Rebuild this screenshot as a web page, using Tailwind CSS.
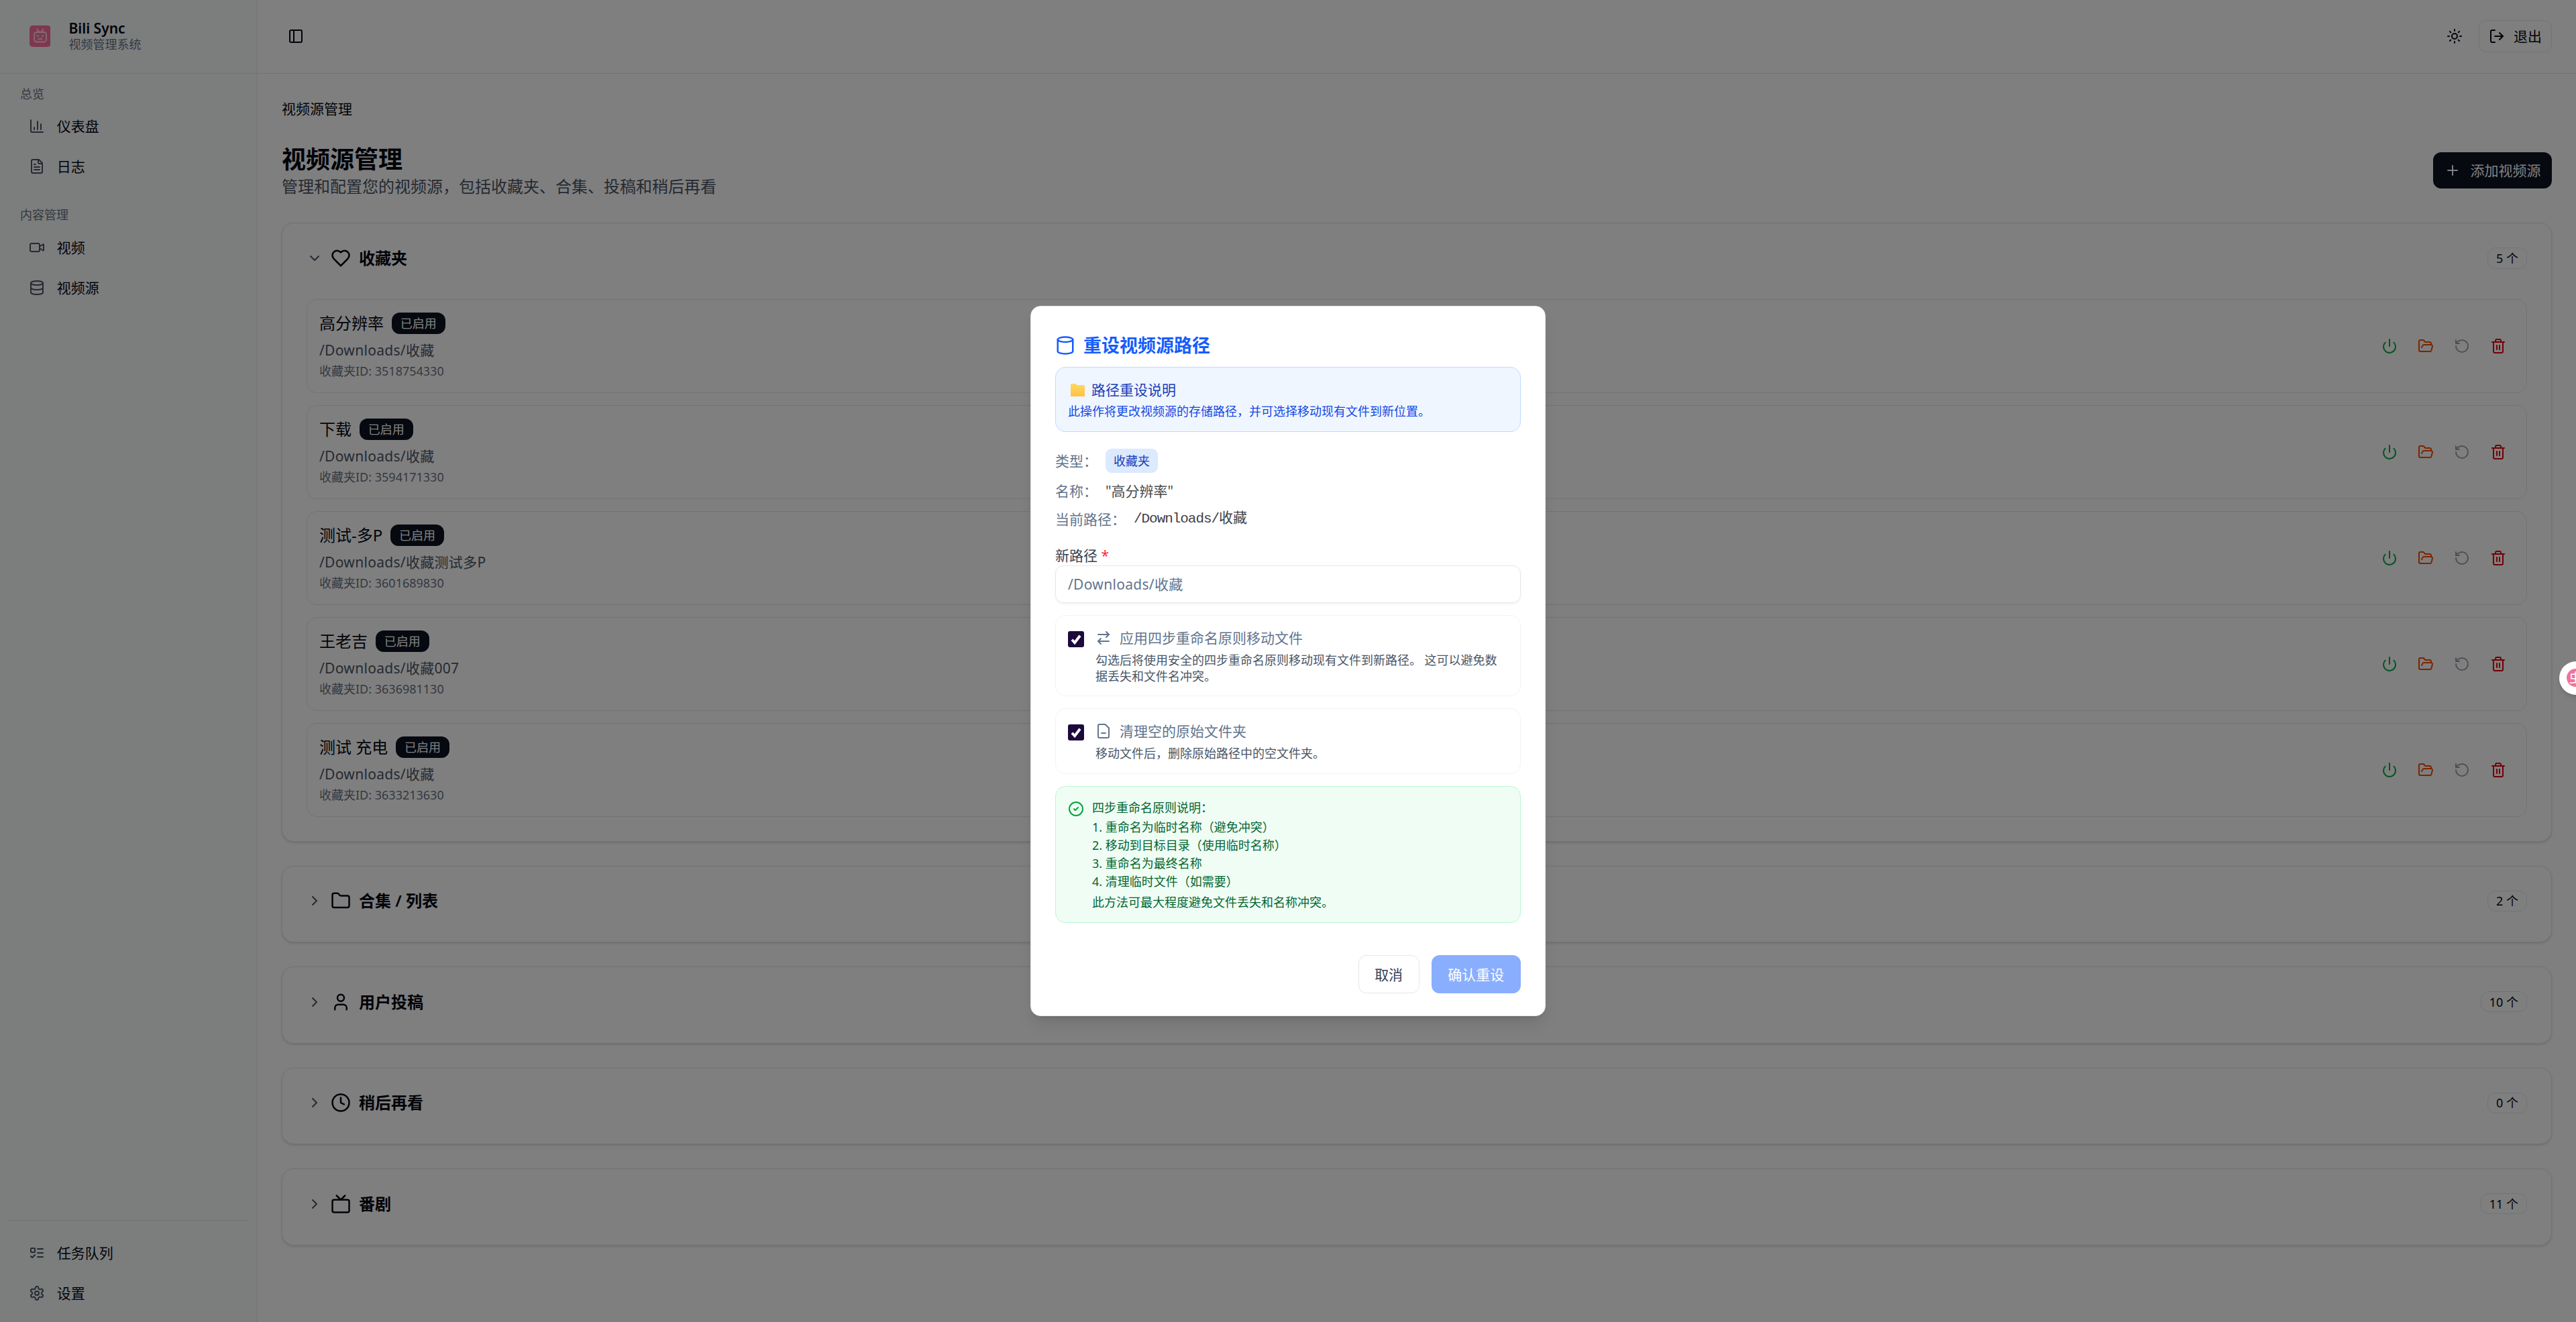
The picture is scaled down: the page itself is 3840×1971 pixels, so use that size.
<!DOCTYPE html>
<html lang="zh-CN">
<head>
    <meta charset="UTF-8">
    <title>Bili Sync</title>
    <script src="https://cdn.jsdelivr.net/npm/@tailwindcss/browser@4"></script>
</head>
<body class="overflow-hidden bg-white">
    <!-- icon sprites -->
    <svg class="hidden">
        <symbol id="i-panel" viewBox="0 0 24 24"><rect x="3" y="3" width="18" height="18" rx="2"/><path d="M9 3v18"/></symbol>
        <symbol id="i-chart" viewBox="0 0 24 24"><path d="M3 3v16a2 2 0 0 0 2 2h16"/><path d="M18 17V9"/><path d="M13 17V5"/><path d="M8 17v-3"/></symbol>
        <symbol id="i-file" viewBox="0 0 24 24"><path d="M15 2H6a2 2 0 0 0-2 2v16a2 2 0 0 0 2 2h12a2 2 0 0 0 2-2V7Z"/><path d="M14 2v4a2 2 0 0 0 2 2h4"/><path d="M10 9H8"/><path d="M16 13H8"/><path d="M16 17H8"/></symbol>
        <symbol id="i-video" viewBox="0 0 24 24"><path d="m16 13 5.223 3.482a.5.5 0 0 0 .777-.416V7.870a.5.5 0 0 0-.752-.432L16 10.500"/><rect x="2" y="6" width="14" height="12" rx="2"/></symbol>
        <symbol id="i-db" viewBox="0 0 24 24"><ellipse cx="12" cy="5" rx="9" ry="3"/><path d="M3 5V19A9 3 0 0 0 21 19V5"/><path d="M3 12A9 3 0 0 0 21 12"/></symbol>
        <symbol id="i-cyl" viewBox="0 0 24 24"><ellipse cx="12" cy="5" rx="9" ry="3"/><path d="M3 5V19A9 3 0 0 0 21 19V5"/></symbol>
        <symbol id="i-todo" viewBox="0 0 24 24"><rect x="3" y="5" width="6" height="6" rx="1"/><path d="m3 17 2 2 4-4"/><path d="M13 6h8"/><path d="M13 12h8"/><path d="M13 18h8"/></symbol>
        <symbol id="i-gear" viewBox="0 0 24 24"><path d="M12.22 2h-.44a2 2 0 0 0-2 2v.18a2 2 0 0 1-1 1.73l-.43.25a2 2 0 0 1-2 0l-.15-.08a2 2 0 0 0-2.73.73l-.22.38a2 2 0 0 0 .73 2.73l.15.1a2 2 0 0 1 1 1.72v.51a2 2 0 0 1-1 1.74l-.15.09a2 2 0 0 0-.73 2.73l.22.38a2 2 0 0 0 2.73.73l.15-.08a2 2 0 0 1 2 0l.43.25a2 2 0 0 1 1 1.73V20a2 2 0 0 0 2 2h.44a2 2 0 0 0 2-2v-.18a2 2 0 0 1 1-1.73l.43-.25a2 2 0 0 1 2 0l.15.08a2 2 0 0 0 2.73-.73l.22-.39a2 2 0 0 0-.73-2.73l-.15-.08a2 2 0 0 1-1-1.74v-.5a2 2 0 0 1 1-1.74l.15-.09a2 2 0 0 0 .73-2.73l-.22-.38a2 2 0 0 0-2.73-.73l-.15.08a2 2 0 0 1-2 0l-.43-.25a2 2 0 0 1-1-1.73V4a2 2 0 0 0-2-2z"/><circle cx="12" cy="12" r="3"/></symbol>
        <symbol id="i-sun" viewBox="0 0 24 24"><circle cx="12" cy="12" r="4"/><path d="M12 2v2"/><path d="M12 20v2"/><path d="m4.930 4.930 1.410 1.410"/><path d="m17.660 17.660 1.410 1.410"/><path d="M2 12h2"/><path d="M20 12h2"/><path d="m6.340 17.660-1.410 1.410"/><path d="m19.070 4.930-1.410 1.410"/></symbol>
        <symbol id="i-logout" viewBox="0 0 24 24"><path d="M9 21H5a2 2 0 0 1-2-2V5a2 2 0 0 1 2-2h4"/><path d="m16 17 5-5-5-5"/><path d="M21 12H9"/></symbol>
        <symbol id="i-plus" viewBox="0 0 24 24"><path d="M5 12h14"/><path d="M12 5v14"/></symbol>
        <symbol id="i-down" viewBox="0 0 24 24"><path d="m6 9 6 6 6-6"/></symbol>
        <symbol id="i-right" viewBox="0 0 24 24"><path d="m9 18 6-6-6-6"/></symbol>
        <symbol id="i-heart" viewBox="0 0 24 24"><path d="M19 14c1.490-1.460 3-3.210 3-5.500A5.500 5.500 0 0 0 16.500 3c-1.760 0-3 .5-4.500 2-1.500-1.500-2.740-2-4.500-2A5.500 5.500 0 0 0 2 8.500c0 2.300 1.500 4.050 3 5.500l7 7Z"/></symbol>
        <symbol id="i-folder" viewBox="0 0 24 24"><path d="M20 20a2 2 0 0 0 2-2V8a2 2 0 0 0-2-2h-7.900a2 2 0 0 1-1.690-.9L9.600 3.900A2 2 0 0 0 7.930 3H4a2 2 0 0 0-2 2v13a2 2 0 0 0 2 2Z"/></symbol>
        <symbol id="i-user" viewBox="0 0 24 24"><path d="M19 21v-2a4 4 0 0 0-4-4H9a4 4 0 0 0-4 4v2"/><circle cx="12" cy="7" r="4"/></symbol>
        <symbol id="i-clock" viewBox="0 0 24 24"><circle cx="12" cy="12" r="10"/><path d="M12 6v6l4 2"/></symbol>
        <symbol id="i-tv" viewBox="0 0 24 24"><rect x="2" y="7" width="20" height="15" rx="2"/><path d="m17 2-5 5-5-5"/></symbol>
        <symbol id="i-power" viewBox="0 0 24 24"><path d="M12 2v10"/><path d="M18.400 6.600a9 9 0 1 1-12.770.04"/></symbol>
        <symbol id="i-open" viewBox="0 0 24 24"><path d="m6 14 1.500-2.900A2 2 0 0 1 9.240 10H20a2 2 0 0 1 1.940 2.500l-1.540 6a2 2 0 0 1-1.950 1.500H4a2 2 0 0 1-2-2V5a2 2 0 0 1 2-2h3.900a2 2 0 0 1 1.690.9l.81 1.200a2 2 0 0 0 1.670.9H18a2 2 0 0 1 2 2v2"/></symbol>
        <symbol id="i-undo" viewBox="0 0 24 24"><path d="M3 12a9 9 0 1 0 9-9 9.750 9.750 0 0 0-6.740 2.740L3 8"/><path d="M3 3v5h5"/></symbol>
        <symbol id="i-trash" viewBox="0 0 24 24"><path d="M3 6h18"/><path d="M19 6v14c0 1-1 2-2 2H7c-1 0-2-1-2-2V6"/><path d="M8 6V4c0-1 1-2 2-2h4c1 0 2 1 2 2v2"/><path d="M10 11v6"/><path d="M14 11v6"/></symbol>
        <symbol id="i-swap" viewBox="0 0 24 24"><path d="m16 3 4 4-4 4"/><path d="M20 7H4"/><path d="m8 21-4-4 4-4"/><path d="M4 17h16"/></symbol>
        <symbol id="i-fileminus" viewBox="0 0 24 24"><path d="M14.500 2H6a2 2 0 0 0-2 2v16a2 2 0 0 0 2 2h12a2 2 0 0 0 2-2V7.500L14.500 2z"/><path d="M9 15h6"/></symbol>
        <symbol id="i-check" viewBox="0 0 24 24"><circle cx="12" cy="12" r="10"/><path d="m9 12 2 2 4-4"/></symbol>
    </svg>

    <div class="relative flex w-[2560px] h-[1314px] overflow-hidden [zoom:1.5] text-[#030712] font-['Noto_Sans','Noto_Sans_CJK_SC',sans-serif]">
        <!-- sidebar -->
        <aside class="flex flex-col w-[256px] shrink-0 bg-[#f9fafb] border-r border-[#e5e7eb]">
            <div class="flex items-center h-[73px] shrink-0 pl-[29px] gap-[18px] border-b border-[#e5e7eb]">
                <svg viewBox="0 0 32 32" class="w-[21.33px] h-[21.33px]">
                    <rect width="32" height="32" rx="5" fill="#ff6f9f"/>
                    <g fill="none" stroke="#fff" stroke-opacity=".75" stroke-width="1.8" stroke-linecap="round">
                        <rect x="7" y="10" width="18" height="14.5" rx="3.5"/>
                        <path d="M11.500 5.500 14 9.500M20.500 5.500 18 9.500M11 15l2.500 1M21 15l-2.500 1M13 19.500c1 1.200 2 1.200 3 0 1 1.200 2 1.200 3 0"/>
                    </g>
                </svg>
                <div>
                    <div class="text-sm leading-4 font-semibold">Bili Sync</div>
                    <div class="text-xs leading-4 text-[#6a7282]">视频管理系统</div>
                </div>
            </div>
            <nav class="flex-1 pt-2 text-sm">
                <div class="h-6 pl-5 flex items-center text-xs text-[#6a7282]">总览</div>
                <a class="flex items-center h-10 pl-[28.5px] gap-3"><svg class="size-4 fill-none stroke-[#4a5565] stroke-2 [stroke-linecap:round] [stroke-linejoin:round]"><use href="#i-chart"/></svg>仪表盘</a>
                <a class="flex items-center h-10 pl-[28.5px] gap-3"><svg class="size-4 fill-none stroke-[#4a5565] stroke-2 [stroke-linecap:round] [stroke-linejoin:round]"><use href="#i-file"/></svg>日志</a>
                <div class="h-6 mt-4 pl-5 flex items-center text-xs text-[#6a7282]">内容管理</div>
                <a class="flex items-center h-10 mt-px pl-[28.5px] gap-3"><svg class="size-4 fill-none stroke-[#4a5565] stroke-2 [stroke-linecap:round] [stroke-linejoin:round]"><use href="#i-video"/></svg>视频</a>
                <a class="flex items-center h-10 pl-[28.5px] gap-3"><svg class="size-4 fill-none stroke-[#4a5565] stroke-2 [stroke-linecap:round] [stroke-linejoin:round]"><use href="#i-db"/></svg>视频源</a>
            </nav>
            <div class="mx-2 pt-3 pb-[8.5px] border-t border-[#e5e7eb] text-sm">
                <a class="flex items-center h-10 pl-[20.5px] gap-3"><svg class="size-4 fill-none stroke-[#4a5565] stroke-2 [stroke-linecap:round] [stroke-linejoin:round]"><use href="#i-todo"/></svg>任务队列</a>
                <a class="flex items-center h-10 pl-[20.5px] gap-3"><svg class="size-4 fill-none stroke-[#4a5565] stroke-2 [stroke-linecap:round] [stroke-linejoin:round]"><use href="#i-gear"/></svg>设置</a>
            </div>
        </aside>

        <!-- main -->
        <main class="flex-1 min-w-0 flex flex-col bg-white">
            <header class="flex items-center h-[73px] shrink-0 pl-[30px] pr-6 border-b border-[#e5e7eb]">
                <svg class="size-4 fill-none stroke-current stroke-2 [stroke-linecap:round] [stroke-linejoin:round]"><use href="#i-panel"/></svg>
                <div class="ml-auto flex items-center gap-2">
                    <button class="flex items-center justify-center size-8"><svg class="size-4 fill-none stroke-current stroke-2 [stroke-linecap:round] [stroke-linejoin:round]"><use href="#i-sun"/></svg></button>
                    <button class="flex items-center justify-center gap-[9px] w-[73px] h-8 rounded-lg border border-[#e5e7eb] text-sm"><svg class="size-4 fill-none stroke-current stroke-2 [stroke-linecap:round] [stroke-linejoin:round]"><use href="#i-logout"/></svg>退出</button>
                </div>
            </header>

            <div class="flex-1 px-6 pt-[25px]">
                <div class="text-sm leading-5">视频源管理</div>
                <div class="flex items-center justify-between mt-[24.5px]">
                    <div>
                        <h1 class="text-2xl leading-8 font-bold">视频源管理</h1>
                        <p class="text-base leading-[21px] text-[#4a5565]">管理和配置您的视频源，包括收藏夹、合集、投稿和稍后再看</p>
                    </div>
                    <button class="flex items-center justify-center gap-[10px] w-[118px] h-9 rounded-lg bg-[#0c1220] text-white text-sm"><svg class="size-4 fill-none stroke-current stroke-2 [stroke-linecap:round] [stroke-linejoin:round]"><use href="#i-plus"/></svg>添加视频源</button>
                </div>

                <div id="sections" class="flex flex-col gap-6 mt-[26px]"></div>
            </div>
        </main>

        <!-- dialog overlay -->
        <div class="absolute inset-0 bg-black/50 flex items-center justify-center">
            <div class="w-[512px] bg-white rounded-[10px] border border-[#e5e7eb] pt-[25.1px] px-6 pb-[22.4px] shadow-lg">
                <h2 class="flex items-center gap-2 text-lg leading-7 font-semibold text-[#155dfc]">
                    <svg class="size-5 fill-none stroke-current stroke-2 [stroke-linecap:round] [stroke-linejoin:round]"><use href="#i-cyl"/></svg>重设视频源路径
                </h2>
                <div class="mt-[7.5px] p-3 rounded-[10px] bg-[#eff6ff] border border-[#bedbff]">
                    <div class="flex items-center h-5 text-sm text-[#193cb8]">
                        <svg viewBox="0 0 14 13" class="w-[14px] h-[13px] ml-[2.7px] mr-[6.6px]">
                            <defs><linearGradient id="fold" x1="0" y1="0" x2="0" y2="1"><stop offset="0" stop-color="#ffd766"/><stop offset="1" stop-color="#ffc23d"/></linearGradient></defs>
                            <path d="M1 0h4l1.500 1.500H13a1 1 0 0 1 1 1V12a1 1 0 0 1-1 1H1a1 1 0 0 1-1-1V1a1 1 0 0 1 1-1z" fill="url(#fold)"/>
                        </svg>路径重设说明
                    </div>
                    <div class="mt-[3px] text-xs leading-4 text-[#1447e6]">此操作将更改视频源的存储路径，并可选择移动现有文件到新位置。</div>
                </div>

                <div class="flex items-center gap-2 mt-[16.5px] text-sm text-[#62748e]">类型：<span class="flex items-center h-6 px-2 rounded-md bg-[#dbeafe] text-xs text-[#193cb8]">收藏夹</span></div>
                <div class="flex items-center gap-2 mt-2 h-5 text-sm text-[#62748e]">名称：<span class="text-[#4a4a4a]">"高分辨率"</span></div>
                <div class="flex items-center gap-2 mt-2 h-5 text-sm text-[#62748e]">当前路径：<span class="text-[#3f3f46] font-['Liberation_Mono','Noto_Sans_CJK_SC',monospace]"><span class="tracking-[-0.7px]">/Downloads/</span>收藏</span></div>

                <div class="mt-4 text-sm leading-5 text-[#364153]">新路径 <span class="text-[#fb2c36]">*</span></div>
                <div class="flex items-center h-[37.5px] px-3 rounded-lg border border-[#e5e7eb] shadow-xs text-sm tracking-[0.2px] text-[#62748e]">/Downloads/收藏</div>

                <div class="flex gap-[11.3px] mt-3 pt-3 px-3 pb-[11.3px] rounded-[10px] border border-[#f1f3f7]">
                    <span class="flex items-center justify-center size-4 mt-[3.7px] shrink-0 rounded-[2px] bg-[#1c0a3c]">
                        <svg viewBox="0 0 16 16" class="size-4 fill-none stroke-white stroke-[2.6]"><path d="m4 8.500 2.700 3L12 4.500"/></svg>
                    </span>
                    <div class="min-w-0">
                        <div class="flex items-center gap-2 h-5 text-sm text-[#62748e]"><svg class="size-4 fill-none stroke-current stroke-2 [stroke-linecap:round] [stroke-linejoin:round]"><use href="#i-swap"/></svg>应用四步重命名原则移动文件</div>
                        <p class="mt-1 text-xs leading-4 text-[#4a5565]">勾选后将使用安全的四步重命名原则移动现有文件到新路径。 这可以避免数据丢失和文件名冲突。</p>
                    </div>
                </div>
                <div class="flex gap-[11.3px] mt-3 p-3 rounded-[10px] border border-[#f1f3f7]">
                    <span class="flex items-center justify-center size-4 mt-[3.7px] shrink-0 rounded-[2px] bg-[#1c0a3c]">
                        <svg viewBox="0 0 16 16" class="size-4 fill-none stroke-white stroke-[2.6]"><path d="m4 8.500 2.700 3L12 4.500"/></svg>
                    </span>
                    <div class="min-w-0">
                        <div class="flex items-center gap-2 h-5 text-sm text-[#62748e]"><svg class="size-4 fill-none stroke-current stroke-2 [stroke-linecap:round] [stroke-linejoin:round]"><use href="#i-fileminus"/></svg>清理空的原始文件夹</div>
                        <p class="mt-1 text-xs leading-4 text-[#4a5565]">移动文件后，删除原始路径中的空文件夹。</p>
                    </div>
                </div>

                <div class="flex gap-2 mt-3 pt-[12.7px] px-3 pb-[12.3px] rounded-[10px] bg-[#f0fdf4] border border-[#b9f8cf] text-xs text-[#016630]">
                    <svg class="size-4 mt-[1.5px] shrink-0 fill-none stroke-[#00a63e] stroke-2 [stroke-linecap:round] [stroke-linejoin:round]"><use href="#i-check"/></svg>
                    <div>
                        <div class="leading-4">四步重命名原则说明：</div>
                        <div class="mt-[3px] leading-[18px]">
                            <div>1. 重命名为临时名称（避免冲突）</div>
                            <div>2. 移动到目标目录（使用临时名称）</div>
                            <div>3. 重命名为最终名称</div>
                            <div>4. 清理临时文件（如需要）</div>
                        </div>
                        <div class="mt-[3px] leading-4">此方法可最大程度避免文件丢失和名称冲突。</div>
                    </div>
                </div>

                <div class="flex justify-end gap-3 mt-8">
                    <button class="w-[60.5px] h-[37.7px] rounded-lg border border-[#e5e7eb] text-sm text-[#364153]">取消</button>
                    <button class="w-[89px] h-[37.7px] rounded-lg bg-[#8aaefe] text-sm text-white">确认重设</button>
                </div>
            </div>
        </div>

        <!-- floating helper above the overlay -->
        <div class="absolute left-[2543.3px] top-[657.3px] flex items-center size-[33.33px] rounded-full bg-white shadow-md pl-[7.4px]">
            <span class="flex items-center justify-center size-[18px] shrink-0 rounded-full bg-[#f0749a] text-white text-[13px] leading-none">虫</span>
        </div>
    </div>

    <script>
        const sections = [
            { icon: 'i-heart', name: '收藏夹', count: '5 个', open: true },
            { icon: 'i-folder', name: '合集 / 列表', count: '2 个' },
            { icon: 'i-user', name: '用户投稿', count: '10 个' },
            { icon: 'i-clock', name: '稍后再看', count: '0 个' },
            { icon: 'i-tv', name: '番剧', count: '11 个' },
        ];
        const favorites = [
            { name: '高分辨率', path: '/Downloads/收藏', id: '3518754330' },
            { name: '下载', path: '/Downloads/收藏', id: '3594171330' },
            { name: '测试-多P', path: '/Downloads/收藏测试多P', id: '3601689830' },
            { name: '王老吉', path: '/Downloads/收藏007', id: '3636981130' },
            { name: '测试 充电', path: '/Downloads/收藏', id: '3633213630' },
        ];

        const action = (icon, color) => `
            <button class="flex items-center justify-center size-8">
                <svg class="size-4 fill-none stroke-2 [stroke-linecap:round] [stroke-linejoin:round] ${color}"><use href="#${icon}"/></svg>
            </button>`;

        const row = f => `
            <div class="flex items-center justify-between h-[93.33px] px-3 rounded-[10px] border border-[#e5e7eb]">
                <div>
                    <div class="flex items-center gap-2 h-[21.33px]">
                        <span class="text-base">${f.name}</span>
                        <span class="flex items-center h-[21.33px] px-[8.5px] rounded-lg bg-[#0c1220] text-white text-xs">已启用</span>
                    </div>
                    <div class="mt-[6px] text-sm leading-5 tracking-[0.2px] text-[#4a5565]">${f.path}</div>
                    <div class="mt-[3px] text-xs leading-4 text-[#6a7282]">收藏夹ID: ${f.id}</div>
                </div>
                <div class="flex gap-1">
                    ${action('i-power', 'stroke-[#00a63e]')}
                    ${action('i-open', 'stroke-[#f54a00]')}
                    ${action('i-undo', 'stroke-[#99a1af]')}
                    ${action('i-trash', 'stroke-[#e7000b]')}
                </div>
            </div>`;

        const section = s => `
            <section class="bg-white rounded-xl border border-[#e5e7eb] shadow-sm">
                <div class="flex items-center h-[74px] pb-[5px] px-6">
                    <svg class="size-4 mr-2 fill-none stroke-[#4a5565] stroke-2 [stroke-linecap:round] [stroke-linejoin:round]"><use href="#${s.open ? 'i-down' : 'i-right'}"/></svg>
                    <svg class="size-5 mr-2 fill-none stroke-current stroke-2 [stroke-linecap:round] [stroke-linejoin:round]"><use href="#${s.icon}"/></svg>
                    <span class="text-base font-semibold">${s.name}</span>
                    <span class="ml-auto flex items-center h-[20.7px] px-2 rounded-lg border border-[#e5e7eb] text-xs">${s.count}</span>
                </div>
                ${s.open ? `<div class="flex flex-col gap-3 mt-px px-6 pb-6">${favorites.map(row).join('')}</div>` : '<div class="h-px"></div>'}
            </section>`;

        document.getElementById('sections').innerHTML = sections.map(section).join('');
    </script>
</body>
</html>
